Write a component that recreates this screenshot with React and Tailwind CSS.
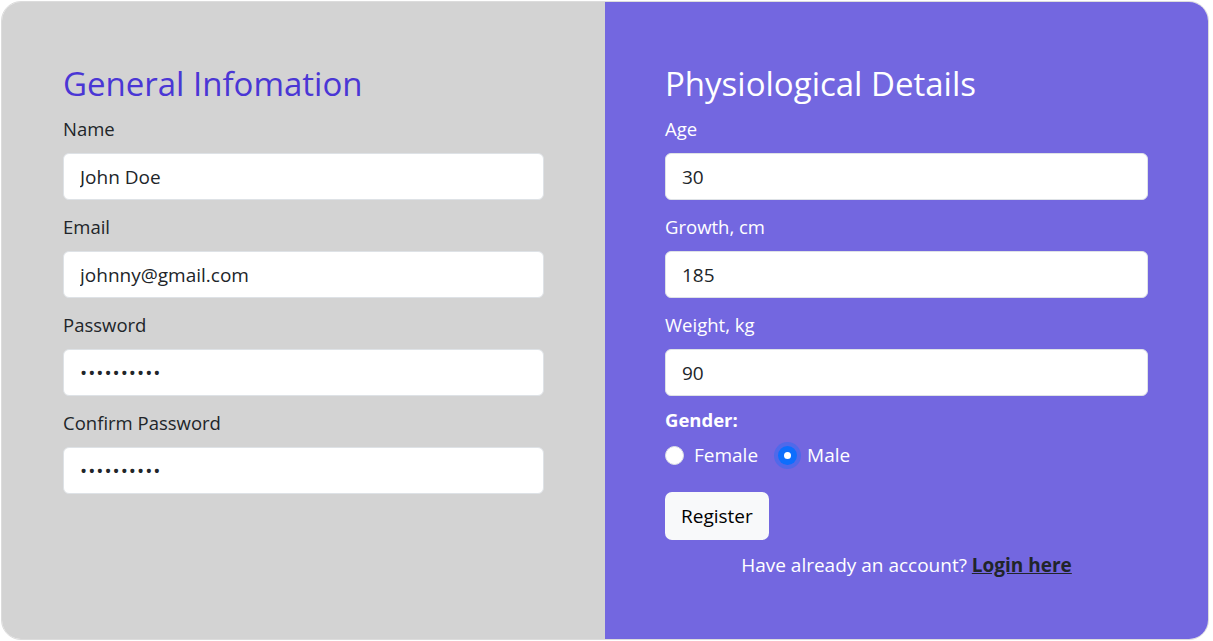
import React from 'react'

const font = { fontFamily: '"Open Sans", "Noto Sans", sans-serif' }

function Field({ label, value, type = 'text', light }) {
  return (
    <div className="mb-[13px]">
      <label className={`block text-[18.5px] leading-[27px] mb-[11px] ${light ? 'text-white' : 'text-[#212529]'}`}>{label}</label>
      <input
        type={type}
        readOnly
        defaultValue={value}
        className={`block w-full h-[47px] px-4 text-[19px] text-[#212529] bg-white border border-[#dee2e6] rounded-[6px] outline-none ${type === 'password' ? 'tracking-[1px]' : ''}`}
        style={font}
      />
    </div>
  )
}

function Radio({ checked, label }) {
  return (
    <label className="flex items-center gap-[10px] text-white text-[19px] leading-[30px]">
      {checked ? (
        <span className="flex items-center justify-center w-[19px] h-[19px] rounded-full bg-[#0d6efd] shadow-[0_0_0_4px_rgba(13,110,253,0.35)]">
          <span className="w-[7px] h-[7px] rounded-full bg-white"></span>
        </span>
      ) : (
        <span className="w-[19px] h-[19px] rounded-full bg-white border border-[#dee2e6]"></span>
      )}
      {label}
    </label>
  )
}

export default function App() {
  return (
    <div className="min-h-screen bg-white p-[1px]" style={font}>
      <div className="grid grid-cols-2 w-[1208px] h-[639px] rounded-[20px] overflow-hidden border border-[#dcdcdc]">
        <div className="bg-[#d3d3d3] pt-[63px] px-[61px]">
          <h2 className="text-[33px] leading-[38px] mb-[12px] text-[#4a36d5]">General Infomation</h2>
          <Field label="Name" value="John Doe" />
          <Field label="Email" value="johnny@gmail.com" />
          <Field label="Password" value="1234567890" type="password" />
          <Field label="Confirm Password" value="1234567890" type="password" />
        </div>
        <div className="bg-[#7367e0] pt-[63px] pl-[60px] pr-[60px]">
          <h2 className="text-[33px] leading-[38px] mb-[12px] text-white">Physiological Details</h2>
          <Field label="Age" value="30" light />
          <Field label="Growth, cm" value="185" light />
          <Field label="Weight, kg" value="90" light />
          <div className="-mt-[3px] text-white text-[18.5px] leading-[27px] font-bold">Gender:</div>
          <div className="flex items-center gap-[20px] mt-[7px]">
            <Radio label="Female" />
            <Radio label="Male" checked />
          </div>
          <button className="mt-[22px] h-[48px] px-4 text-[19px] text-black bg-[#f8f9fa] rounded-[7px]">Register</button>
          <p className="mt-[11px] text-center text-[19px] leading-[28px] text-white">
            Have already an account?{' '}
            <a href="#" className="font-bold underline text-[#212529]">Login here</a>
          </p>
        </div>
      </div>
    </div>
  )
}
